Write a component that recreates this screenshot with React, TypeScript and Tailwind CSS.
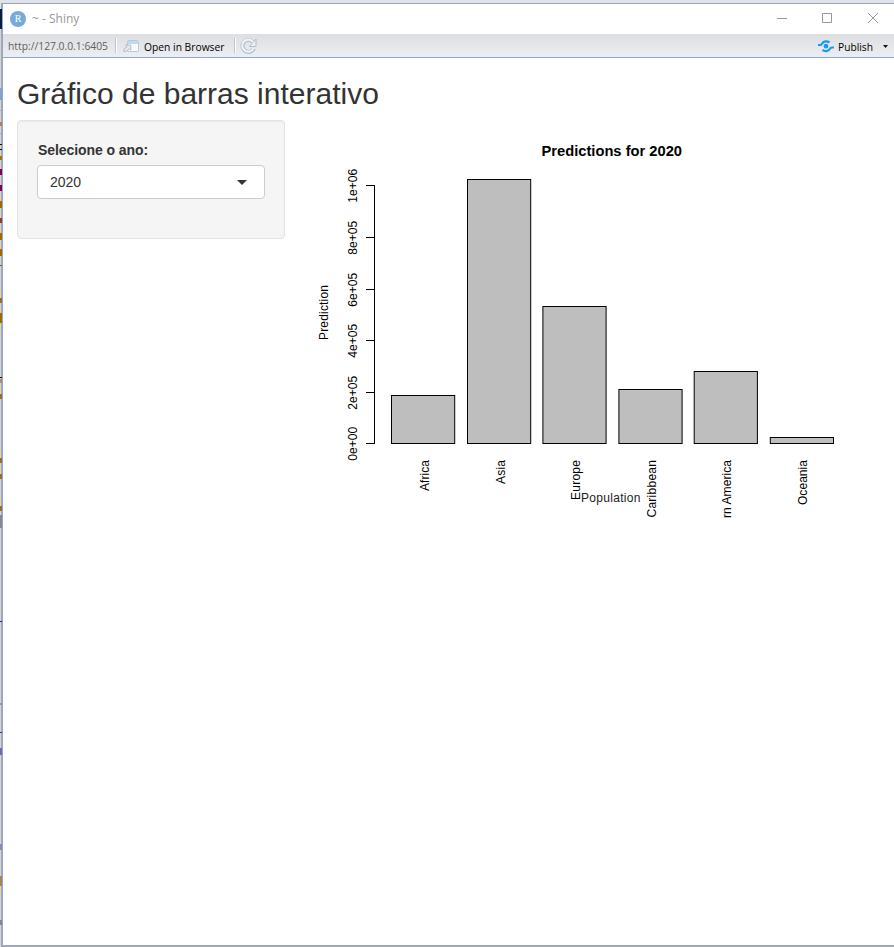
const bars = [
  { label: 'Africa', x: 391.5, top: 395.5, len: 31 },
  { label: 'Asia', x: 467.5, top: 179.5, len: 24 },
  { label: 'Europe', x: 542.9, top: 306.5, len: 40 },
  { label: 'Caribbean', x: 618.9, top: 389.5, len: 57.5 },
  { label: 'rn America', x: 694.2, top: 371.5, len: 58 },
  { label: 'Oceania', x: 770.3, top: 437.5, len: 45 },
];

const ticks = [
  { label: '0e+00', y: 443.5 },
  { label: '2e+05', y: 392.5 },
  { label: '4e+05', y: 340.5 },
  { label: '6e+05', y: 289.5 },
  { label: '8e+05', y: 237.5 },
  { label: '1e+06', y: 185.5 },
];

// Slivers of the editor window visible behind the left edge: [y, height, colour]
const slivers: [number, number, string][] = [
  [9, 20, '#0b1d3f'], [88, 12, '#7fa3cc'], [110, 1, '#aaa'], [122, 4, '#c07b4a'], [133, 1, '#aaa'],
  [144, 1, '#111'], [149, 1, '#111'], [156, 4, '#b06f0a'], [169, 6, '#7f0050'], [185, 6, '#7f0050'],
  [201, 7, '#a06a00'], [218, 5, '#8f3f20'], [233, 7, '#a06a00'], [249, 7, '#a06a00'], [265, 1, '#806020'],
  [298, 5, '#9a6a30'], [313, 10, '#a06a00'], [377, 1, '#111'], [379, 4, '#b08e68'], [394, 5, '#9a6a30'],
  [458, 5, '#9a6a30'], [474, 5, '#9a6a30'], [506, 5, '#9a6a30'], [515, 13, '#888'], [621, 1, '#2222aa'],
  [703, 2, '#a08aa8'], [732, 1, '#5522aa'], [748, 7, '#7862b2'], [844, 6, '#9882b2'], [876, 10, '#a98450'], [920, 5, '#888'],
];

function TitleBar() {
  return (
    <div className="flex h-[30px] items-center bg-white">
      <svg className="ml-[7px] h-4 w-4" viewBox="0 0 16 16">
        <circle cx="8" cy="8" r="8" fill="#75aadb" />
        <text x="8" y="11.3" textAnchor="middle" fontFamily="Liberation Serif, serif" fontSize="10" fill="#fff">R</text>
      </svg>
      <span className="ml-[6px] text-[12px] leading-[30px] text-[#999]">~ - Shiny</span>
      <svg className="ml-auto h-[30px] w-[118px]" viewBox="776 4 118 30" fill="none" stroke="#999" strokeWidth="1">
        <path d="M777 18.5h10M822.5 13.5h9v9h-9zM868 13l10 10M878 13l-10 10" />
      </svg>
    </div>
  );
}

function Toolbar() {
  return (
    <div className="flex h-[24px] items-center border-b border-[#8ca9d6] bg-linear-to-b from-[#dcdee2] to-[#edeef1] text-[11px] leading-[22px]">
      <svg className="h-[23px] w-[108px] shrink-0 overflow-visible" viewBox="3 34 108 23">
        <text x="8" y="50" fontSize="11" textLength="100" lengthAdjust="spacingAndGlyphs" fill="#606060">http://127.0.0.1:6405</text>
      </svg>
      <div className="ml-[4px] h-[15px] w-[2px] border-r border-white bg-[#c3c5c8]" />
      <svg className="h-[23px] w-[112px] shrink-0 overflow-visible" viewBox="117 34 112 23">
        <rect x="127.5" y="40.5" width="11" height="11" rx="1.5" fill="#fafbfc" stroke="#bdc8d5" />
        <path d="M128 41h10v3h-10z" fill="#bcdcf2" />
        <path d="M123.5 51.5l1.2-3.2 2.4-1.8-1.5-1.5h5.2v5.2l-1.5-1.5-2.5 2.5z" fill="#e4e9ef" stroke="#a5b1c0" strokeWidth=".8" />
        <text x="144" y="51" fontSize="11" textLength="80.5" lengthAdjust="spacingAndGlyphs" fill="#000">Open in Browser</text>
      </svg>
      <div className="ml-[5px] h-[15px] w-[2px] border-r border-white bg-[#c3c5c8]" />
      <svg className="ml-[4px] h-[18px] w-[18px]" viewBox="240 37 18 18" fill="none">
        <path d="M253 42a6 6 0 1 0 .9 6.5" stroke="#b0becd" strokeWidth="4" />
        <path d="M249.5 46.5h6.5v-7.5z" fill="#edf1f5" stroke="#b0becd" />
        <path d="M253 42a6 6 0 1 0 .7 6.1" stroke="#f0f3f6" strokeWidth="2.1" />
      </svg>
      <svg className="ml-auto h-[23px] w-[77px]" viewBox="817 34 77 23">
        <g fill="none" stroke="#1a9be8" strokeWidth="2.2">
          <path d="M818 45h2.2c1.2 0 1.3-.5 1.9-1.4 1.6-2.4 5-3 7.4-1" />
          <path d="M834 47.5h-2.2c-1.2 0-1.3.5-1.9 1.4-1.6 2.4-5 3-7.4 1" />
        </g>
        <circle cx="826" cy="46.2" r="2.4" fill="#1a9be8" />
        <text x="838" y="51" fontSize="11" textLength="35" lengthAdjust="spacingAndGlyphs" fill="#000">Publish</text>
        <path d="M883 45h5l-2.5 3z" fill="#111" />
      </svg>
    </div>
  );
}

function BarChart() {
  return (
    <svg className="mt-px ml-[15px] h-[400px] w-[570px]" viewBox="300 121 570 400" fontFamily="Liberation Sans, Arial, sans-serif" fontSize="12" fill="#000">
      <text x="541.5" y="156" fontSize="14" fontWeight="700" textLength="140.5" lengthAdjust="spacingAndGlyphs">Predictions for 2020</text>
      <path d="M374.5 185v259" stroke="#000" />
      {ticks.map((t) => (
        <g key={t.label}>
          <path d={`M366 ${t.y}h8.5`} stroke="#000" />
          <text transform={`translate(357 ${t.y + 17.2}) rotate(-90)`} textLength="34" lengthAdjust="spacing">{t.label}</text>
        </g>
      ))}
      <text transform="translate(328 340) rotate(-90)" textLength="55" lengthAdjust="spacing">Prediction</text>
      {bars.map((b, i) => (
        <g key={b.label}>
          <rect x={b.x} y={b.top} width="63.2" height={443.5 - b.top} fill="#bebebe" stroke="#000" />
          <text transform={`translate(${429 + i * 75.6} ${460 + b.len}) rotate(-90)`} textLength={b.len} lengthAdjust="spacing">{b.label}</text>
        </g>
      ))}
      <text x="581" y="502" textLength="59.5" lengthAdjust="spacing" fill="#222">Population</text>
    </svg>
  );
}

export default function App() {
  return (
    <div className="relative h-[947px] w-[894px] overflow-hidden bg-[#dfe3ec] pt-[3px] font-['Open_Sans','Noto_Sans',sans-serif]">
      <div className="absolute top-[30px] left-0 h-[917px] w-px bg-[#d4d4d4]" />
      <div className="absolute top-[3px] left-px h-[944px] w-px bg-[#a8a8a8]" />
      {slivers.map(([y, h, color]) => (
        <div key={y} className="absolute left-0 w-[2px]" style={{ top: y, height: h, background: color }} />
      ))}
      <div className="ml-[2px] flex h-[944px] flex-col border-t border-b border-t-[#a0a2a8] border-b-[#a9a9a9]">
        <div className="flex flex-1 flex-col border-b border-l border-b-[#8ca9d6] border-l-[#8ca9d6] bg-white">
          <TitleBar />
          <Toolbar />
          <main className="pl-[14px] font-['Liberation_Sans',Arial,sans-serif] text-[#333]">
            <h2 className="h-[62px] pt-[19px] text-[30px] leading-[33px]">Gráfico de barras interativo</h2>
            <div className="flex items-start">
              <section className="h-[119px] w-[268px] rounded-[4px] border border-[#e3e3e3] bg-[#f5f5f5] px-[19px] pt-[19px] shadow-[inset_0_1px_1px_rgba(0,0,0,0.05)]">
                <label className="block pl-px text-[14px] leading-5 font-bold tracking-[-0.07px]">Selecione o ano:</label>
                <button className="mt-[5px] flex h-[34px] w-[228px] items-center justify-between rounded-[4px] border border-[#ccc] bg-white pr-[17px] pl-3 text-[14px]">
                  2020
                  <svg className="h-[5px] w-[10px]" viewBox="0 0 10 5"><path d="M0 0h10L5 5z" fill="#333" /></svg>
                </button>
              </section>
              <BarChart />
            </div>
          </main>
        </div>
      </div>
    </div>
  );
}
